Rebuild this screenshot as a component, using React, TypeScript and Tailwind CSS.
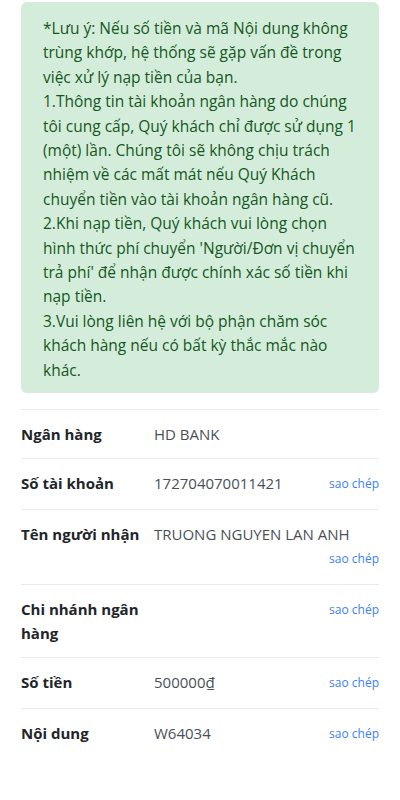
import React from "react";

const rows: { label: string; value: string; copy: boolean }[] = [
  { label: "Ngân hàng", value: "HD BANK", copy: false },
  { label: "Số tài khoản", value: "172704070011421", copy: true },
  { label: "Tên người nhận", value: "TRUONG NGUYEN LAN ANH", copy: true },
  { label: "Chi nhánh ngân hàng", value: "", copy: true },
  { label: "Số tiền", value: "500000₫", copy: true },
  { label: "Nội dung", value: "W64034", copy: true },
];

export default function App() {
  return (
    <div
      className="w-[400px] min-h-[800px] bg-white px-[21px] pt-[2px]"
      style={{ fontFamily: '"Open Sans", "Noto Sans", sans-serif' }}
    >
      <div className="rounded-[6px] bg-[#d4edda] text-[#155724] text-[15.5px] leading-[24.4px] pl-[22px] pr-[18px] pt-[14px] pb-[11px]">
        <p>*Lưu ý: Nếu số tiền và mã Nội dung không trùng khớp, hệ thống sẽ gặp vấn đề trong việc xử lý nạp tiền của bạn.</p>
        <p>1.Thông tin tài khoản ngân hàng do chúng tôi cung cấp, Quý khách chỉ được sử dụng 1 (một) lần. Chúng tôi sẽ không chịu trách nhiệm về các mất mát nếu Quý Khách chuyển tiền vào tài khoản ngân hàng cũ.</p>
        <p>2.Khi nạp tiền, Quý khách vui lòng chọn hình thức phí chuyển 'Người/Đơn vị chuyển trả phí' để nhận được chính xác số tiền khi nạp tiền.</p>
        <p>3.Vui lòng liên hệ với bộ phận chăm sóc khách hàng nếu có bất kỳ thắc mắc nào khác.</p>
      </div>
      <div className="mt-[16px]">
        {rows.map((r) => (
          <div key={r.label} className="flex border-t border-[#e9ecef] py-[12px]">
            <div className="w-[133px] shrink-0 font-bold text-[15px] leading-[24px] text-[#212529] pr-2">
              {r.label}
            </div>
            <div className="flex flex-1 flex-wrap items-start">
              <span className="text-[15px] leading-[24px] text-[#495057]">{r.value}</span>
              {r.copy && (
                <span className="ml-auto text-[12px] leading-[26px] text-[#3b82f6]">sao chép</span>
              )}
            </div>
          </div>
        ))}
      </div>
    </div>
  );
}
